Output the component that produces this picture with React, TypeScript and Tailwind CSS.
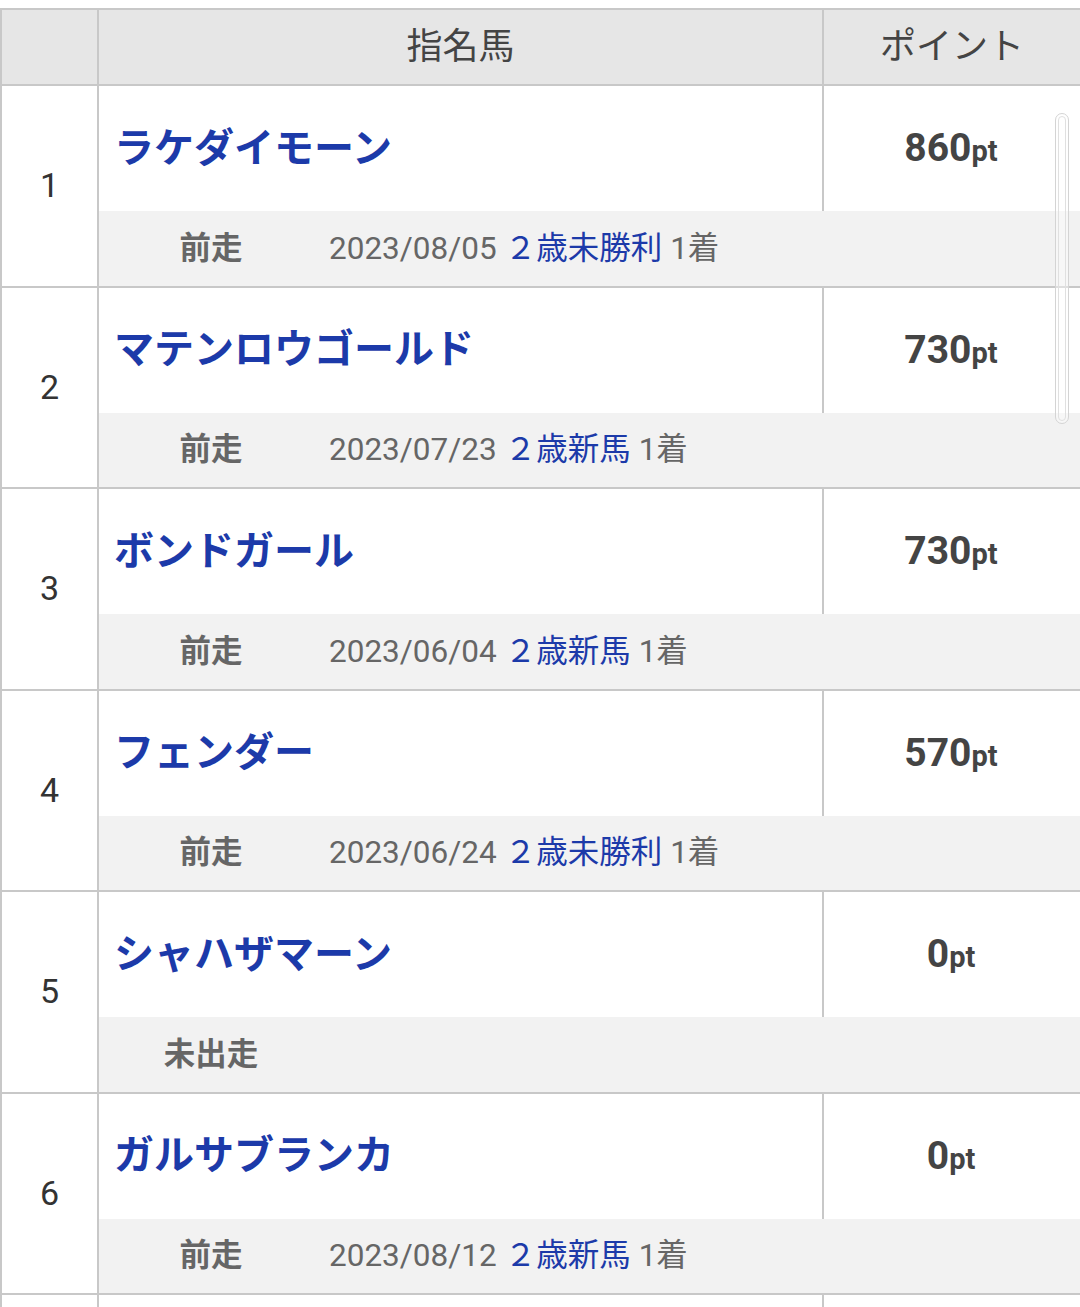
import React from 'react';

interface Horse {
  rank: number;
  name: string;
  points: number;
  date?: string;
  race?: string;
  place?: string;
}

const horses: Horse[] = [
  { rank: 1, name: 'ラケダイモーン', points: 860, date: '2023/08/05', race: '２歳未勝利', place: '1着' },
  { rank: 2, name: 'マテンロウゴールド', points: 730, date: '2023/07/23', race: '２歳新馬', place: '1着' },
  { rank: 3, name: 'ボンドガール', points: 730, date: '2023/06/04', race: '２歳新馬', place: '1着' },
  { rank: 4, name: 'フェンダー', points: 570, date: '2023/06/24', race: '２歳未勝利', place: '1着' },
  { rank: 5, name: 'シャハザマーン', points: 0 },
  { rank: 6, name: 'ガルサブランカ', points: 0, date: '2023/08/12', race: '２歳新馬', place: '1着' },
];

const font = "font-['Roboto','Noto_Sans_CJK_JP',sans-serif]";

const HorseRow: React.FC<{ horse?: Horse }> = ({ horse }) => {
  return (
    <div className="flex border-b-2 border-[#c8c8c8]">
      <div className="w-[97px] shrink-0 flex items-center justify-center border-r-2 border-[#c8c8c8] text-[34px] text-[#333]">
        {horse?.rank}
      </div>
      <div className="flex-1 flex flex-col">
        <div className="flex h-[125px]">
          <div className="flex-1 flex items-center pl-[15px] text-[40px] font-bold text-[#1c3aa9] leading-none">
            {horse?.name}
          </div>
          <div className="w-[258px] shrink-0 flex items-center justify-center border-l-2 border-[#c8c8c8] text-[#444] font-bold">
            {horse && (
              <span className="leading-none pr-[2px]">
                <span className="text-[39px]">{horse.points}</span>
                <span className="text-[29px]">pt</span>
              </span>
            )}
          </div>
        </div>
        {horse && (
          <div className="h-[74.5px] bg-[#f2f2f2] flex items-center text-[31.5px] leading-none">
            {horse.date ? (
              <>
                <div className="w-[224px] text-center font-bold text-[#666]">前走</div>
                <span className="pl-[6px] text-[#666]">{horse.date}</span>
                <span className="pl-[8px] text-[#1c3aa9]">{horse.race}</span>
                <span className="pl-[8px] text-[#666]">{horse.place}</span>
              </>
            ) : (
              <div className="w-[224px] text-center font-bold text-[#666]">未出走</div>
            )}
          </div>
        )}
      </div>
    </div>
  );
};

export default function App() {
  return (
    <div className={`${font} relative h-[1307px] overflow-hidden bg-white pt-[8px]`}>
      <div className="border-t-2 border-l-2 border-[#c8c8c8]">
        <div className="flex h-[76px] bg-[#e6e6e6] border-b-2 border-[#c8c8c8] text-[36px] text-[#444]">
          <div className="w-[97px] shrink-0 border-r-2 border-[#c8c8c8]" />
          <div className="flex-1 flex items-center justify-center">指名馬</div>
          <div className="w-[258px] shrink-0 flex items-center justify-center border-l-2 border-[#c8c8c8]">
            ポイント
          </div>
        </div>
        {horses.map((h) => (
          <HorseRow key={h.rank} horse={h} />
        ))}
        <HorseRow />
      </div>
      {/* scroll indicator */}
      <div className="absolute left-[1055px] top-[113px] w-[14px] h-[311px] rounded-full border border-[#d4d4d4] bg-white/40 p-[2px]">
        <div className="w-full h-full rounded-full border border-[#e0e0e0]" />
      </div>
    </div>
  );
}
